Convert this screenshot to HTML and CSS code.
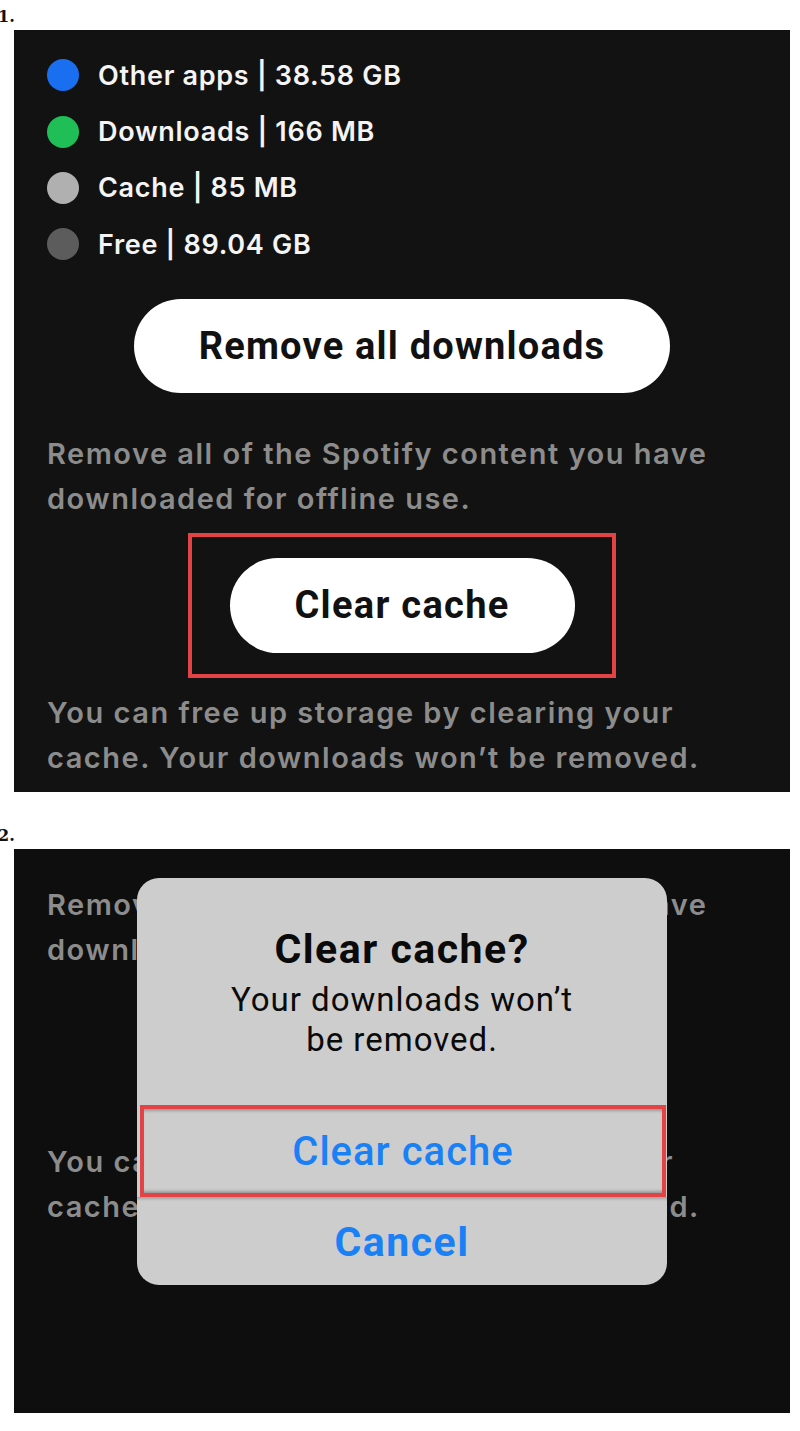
FILE: index.html
```html
<!DOCTYPE html>
<html lang="en">

<head>
    <meta charset="UTF-8">
    <meta name="viewport" content="width=device-width, initial-scale=1.0">
    <title>Clear Spotify cache</title>
    <link rel="stylesheet" href="styles.css">
</head>

<body>
    <!-- passo 1: tela de armazenamento -->
    <div class="step">
        <div class="step-num">1.</div>
        <div class="screen first">
            <ul class="legend">
                <li><span class="dot blue"></span>Other apps | 38.58 GB</li>
                <li><span class="dot green"></span>Downloads | 166 MB</li>
                <li><span class="dot light"></span>Cache | 85 MB</li>
                <li><span class="dot dark"></span>Free | 89.04 GB</li>
            </ul>
            <button class="pill wide">Remove all downloads</button>
            <p class="note">Remove all of the Spotify content you have downloaded for offline use.</p>
            <div class="mark">
                <button class="pill">Clear cache</button>
            </div>
            <p class="note">You can free up storage by clearing your cache. Your downloads won’t be removed.</p>
        </div>
    </div>

    <!-- passo 2: confirmacao -->
    <div class="step second">
        <div class="step-num">2.</div>
        <div class="screen">
            <p class="note">Remove all of the Spotify content you have downloaded for offline use.</p>
            <p class="note low">You can free up storage by clearing your cache. Your downloads won’t be removed.</p>

            <div class="alert">
                <div class="alert-body">
                    <h2>Clear cache?</h2>
                    <p>Your downloads won’t<br>be removed.</p>
                </div>
                <div class="alert-action marked">Clear cache</div>
                <div class="alert-action cancel">Cancel</div>
            </div>
        </div>
    </div>
</body>

</html>
```

FILE: styles.css
```css
body {
    margin: 0;
    background-color: #ffffff;
    font-family: "Open Sans", Arial, sans-serif;
}

.step-num {
    height: 30px;
    line-height: 34px;
    font-family: "DejaVu Serif", serif;
    font-size: 16px;
    font-weight: bold;
    color: #111111;
    margin-left: -2px;
}

.second {
    margin-top: 27px;
}

.screen {
    position: relative;
    margin-left: 14px;
    width: 776px;
    background-color: #121212;
    overflow: hidden;
}

.screen.first {
    height: 762px;
}

.step.second .screen {
    height: 564px;
    background-color: #0e0e0e;
    padding-top: 33px;
    box-sizing: border-box;
}

.legend {
    list-style: none;
    margin: 0;
    padding: 17px 0 0 33px;
}

.legend li {
    display: flex;
    align-items: center;
    height: 56.4px;
    color: #f4f4f4;
    font-family: Inter, sans-serif;
    font-weight: 600;
    font-size: 27px;
    letter-spacing: 0.7px;
}

.dot {
    width: 32px;
    height: 32px;
    border-radius: 50%;
    margin-right: 19px;
}

.blue {
    background-color: #1a6ff0;
}

.green {
    background-color: #1fbe57;
}

.light {
    background-color: #b0b0b0;
}

.dark {
    background-color: #5c5c5c;
}

.pill {
    display: block;
    margin: 0 auto;
    border: none;
    background-color: #ffffff;
    color: #111111;
    font-family: Roboto, sans-serif;
    font-weight: 700;
    font-size: 38px;
    letter-spacing: 1.3px;
    width: 345px;
    height: 95px;
    border-radius: 48px;
    padding: 0;
}

.pill.wide {
    width: 536px;
    height: 94px;
    margin-top: 26px;
    letter-spacing: 1.2px;
}

.note {
    margin: 38px 0 0 33px;
    width: 690px;
    font-family: Inter, sans-serif;
    font-weight: 600;
    font-size: 29px;
    letter-spacing: 1.5px;
    line-height: 45px;
    color: #8c8c8c;
}

.mark {
    width: 428px;
    margin: 12px auto 0;
    padding: 21px 0;
    border: 4px solid #e44345;
    box-sizing: border-box;
    height: 145px;
}

.mark + .note {
    margin-top: 12px;
}

.step.second .note {
    margin-top: 0;
}

.step.second .note.low {
    margin-top: 167px;
}

.alert {
    position: absolute;
    left: 123px;
    top: 29px;
    width: 530px;
    height: 407px;
    background-color: #cdcdcd;
    border-radius: 22px;
    display: flex;
    flex-direction: column;
    font-family: Roboto, sans-serif;
    text-align: center;
    overflow: hidden;
}

.alert-body {
    height: 227px;
    padding-top: 46px;
    box-sizing: border-box;
}

.alert h2 {
    margin: 0;
    font-size: 41px;
    letter-spacing: 1.5px;
    line-height: 50px;
    font-weight: 700;
    color: #0a0a0a;
}

.alert p {
    margin: 6px 0 0;
    font-size: 33px;
    letter-spacing: 1px;
    line-height: 40px;
    color: #0a0a0a;
}

.alert-action {
    display: flex;
    align-items: center;
    justify-content: center;
    font-size: 40px;
    font-weight: 500;
    letter-spacing: 1px;
    color: #1a80f6;
}

.marked {
    height: 92px;
    margin: 0 1px 0 3px;
    border: 4px solid #e44345;
    box-sizing: border-box;
    box-shadow: inset 0 4px 3px -2px rgba(0, 0, 0, 0.25), inset 0 -4px 3px -2px rgba(0, 0, 0, 0.25);
}

.cancel {
    flex: 1;
    font-size: 41px;
    font-weight: 700;
    letter-spacing: 1.5px;
    border-top: 1px solid #a9a9a9;
    box-shadow: inset 0 3px 3px -2px rgba(0, 0, 0, 0.2);
}
```
